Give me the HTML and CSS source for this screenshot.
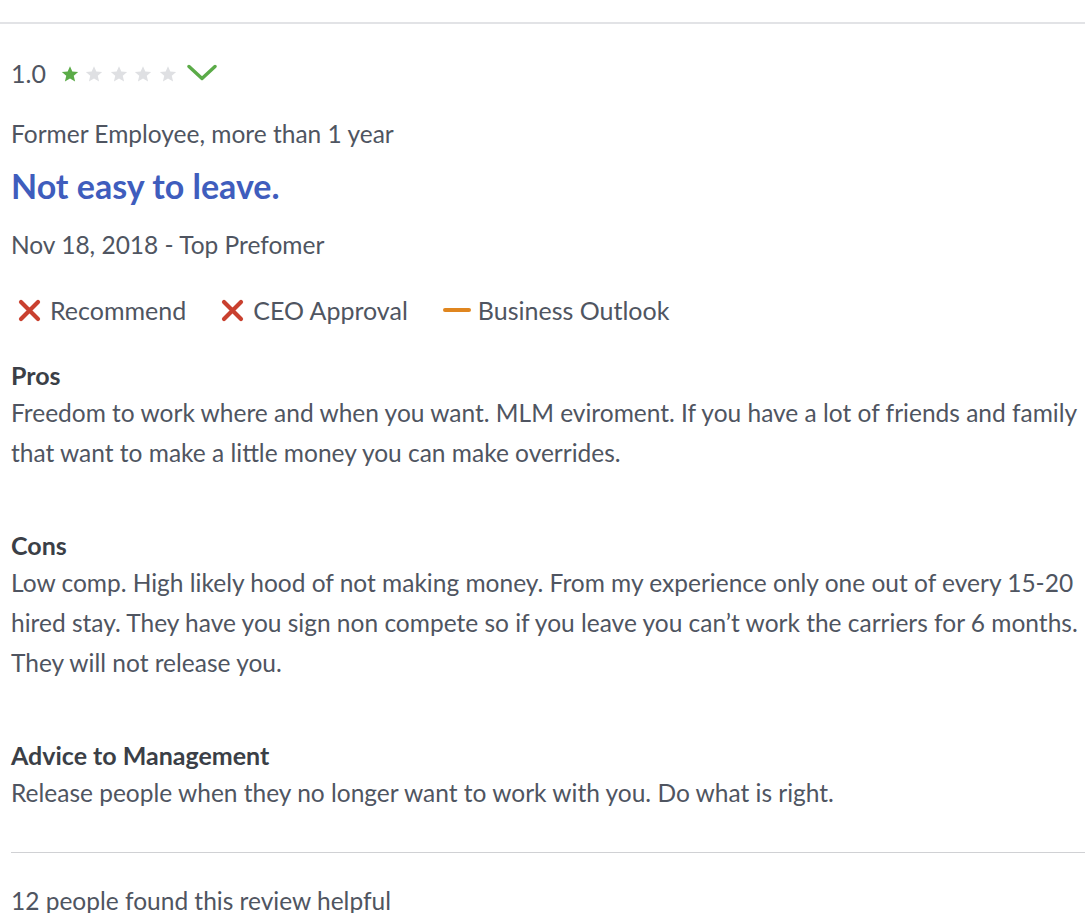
FILE: index.html
```html
<!DOCTYPE html>
<html>
<head>
<meta charset="utf-8">
<link rel="stylesheet" href="styles.css">
</head>
<body>
<div class="topbar"></div>
<div class="review">
  <div class="rating">
    <span class="score">1.0</span>
    <span class="stars">
      <svg class="star on" width="18" height="18" viewBox="0 0 24 24"><path d="M12 1.5l3.1 7.2 7.8.6-5.9 5.1 1.8 7.6L12 18l-6.8 4 1.8-7.6-5.9-5.1 7.8-.6z"/></svg>
      <svg class="star" width="18" height="18" viewBox="0 0 24 24"><path d="M12 1.5l3.1 7.2 7.8.6-5.9 5.1 1.8 7.6L12 18l-6.8 4 1.8-7.6-5.9-5.1 7.8-.6z"/></svg>
      <svg class="star" width="18" height="18" viewBox="0 0 24 24"><path d="M12 1.5l3.1 7.2 7.8.6-5.9 5.1 1.8 7.6L12 18l-6.8 4 1.8-7.6-5.9-5.1 7.8-.6z"/></svg>
      <svg class="star" width="18" height="18" viewBox="0 0 24 24"><path d="M12 1.5l3.1 7.2 7.8.6-5.9 5.1 1.8 7.6L12 18l-6.8 4 1.8-7.6-5.9-5.1 7.8-.6z"/></svg>
      <svg class="star" width="18" height="18" viewBox="0 0 24 24"><path d="M12 1.5l3.1 7.2 7.8.6-5.9 5.1 1.8 7.6L12 18l-6.8 4 1.8-7.6-5.9-5.1 7.8-.6z"/></svg>
    </span>
    <svg class="chev" width="30" height="17" viewBox="0 0 30 17"><path d="M2 2.5 L15 14.5 L28 2.5" fill="none" stroke="#5bab48" stroke-width="3.4" stroke-linecap="round" stroke-linejoin="round"/></svg>
  </div>
  <div class="role">Former Employee, more than 1 year</div>
  <h2 class="title">Not easy to leave.</h2>
  <div class="date">Nov 18, 2018 - Top Prefomer</div>
  <div class="flags">
    <span class="flag"><svg class="x" width="23" height="23" viewBox="0 0 23 23"><path d="M3 3 L20 20 M20 3 L3 20" stroke="#c9402f" stroke-width="4.2" stroke-linecap="round"/></svg>Recommend</span>
    <span class="flag"><svg class="x" width="23" height="23" viewBox="0 0 23 23"><path d="M3 3 L20 20 M20 3 L3 20" stroke="#c9402f" stroke-width="4.2" stroke-linecap="round"/></svg>CEO Approval</span>
    <span class="flag"><span class="dash"></span>Business Outlook</span>
  </div>
  <div class="section">
    <div class="label">Pros</div>
    <p class="text">Freedom to work where and when you want. MLM eviroment. If you have a lot of friends and family that want to make a little money you can make overrides.</p>
  </div>
  <div class="section">
    <div class="label">Cons</div>
    <p class="text">Low comp. High likely hood of not making money. From my experience only one out of every 15-20 hired stay. They have you sign non compete so if you leave you can’t work the carriers for 6 months. They will not release you.</p>
  </div>
  <div class="section">
    <div class="label">Advice to Management</div>
    <p class="text">Release people when they no longer want to work with you. Do what is right.</p>
  </div>
  <div class="divider"></div>
  <div class="helpful">12 people found this review helpful</div>
</div>
</body>
</html>
```
FILE: styles.css
```css
html, body {
  margin: 0;
  padding: 0;
  background: #fff;
}
body {
  font-family: Lato, "Open Sans", sans-serif;
  color: #4f5561;
  width: 1085px;
  overflow: hidden;
}
.topbar {
  margin-top: 22px;
  height: 2px;
  background: #e2e3e6;
}
.review {
  padding-left: 11px;
  width: 1074px;
}
.rating {
  display: flex;
  align-items: center;
  height: 30px;
  margin-top: 34px;
}
.score {
  font-size: 25px;
  color: #4f5561;
  margin-right: 15px;
}
.stars {
  display: flex;
  gap: 6.5px;
  margin-right: 10px;
  margin-top: 2px;
}
.star {
  display: block;
  fill: #dfe0e3;
}
.star.on { fill: #5bab48; }
.chev { display: block; margin-top: -2px; }
.role {
  font-size: 24.5px;
  line-height: 30px;
  margin-top: 31px;
}
.title {
  font-size: 34px;
  font-weight: 700;
  color: #3f5dbd;
  margin: 19px 0 0;
  line-height: 36px;
}
.date {
  font-size: 24.5px;
  line-height: 30px;
  margin-top: 26px;
}
.flags {
  display: flex;
  align-items: center;
  gap: 35px;
  margin-top: 35px;
  padding-left: 7px;
  height: 30px;
  font-size: 25px;
}
.flag {
  display: flex;
  align-items: center;
  gap: 9px;
}
.dash {
  display: inline-block;
  width: 28px;
  height: 4px;
  border-radius: 2px;
  background: #e0861f;
  margin-right: -2px;
}
.section {
  margin-top: 35px;
}
.section + .section {
  margin-top: 57px;
}
.label {
  font-size: 25px;
  font-weight: 700;
  color: #3b3f47;
  line-height: 30px;
}
.text {
  font-size: 24.5px;
  line-height: 40px;
  margin: 3px 0 0;
}
.divider {
  height: 1px;
  background: #d0d1d4;
  margin-top: 39px;
}
.helpful {
  font-size: 24.5px;
  margin-top: 33px;
  line-height: 30px;
}
```
